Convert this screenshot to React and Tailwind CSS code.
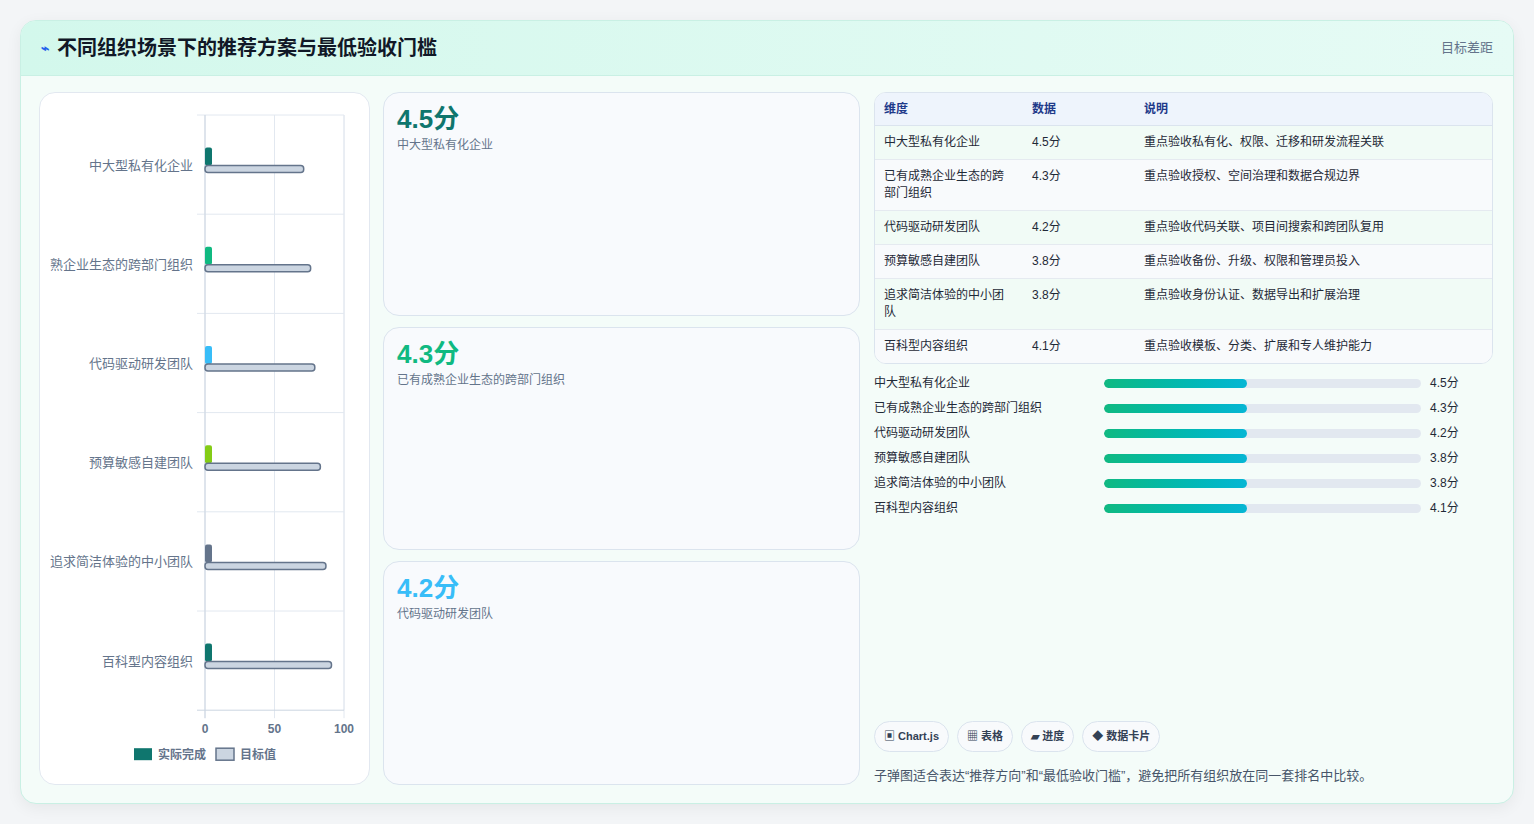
import React from "react";

const rows = [
  { name: "中大型私有化企业", v: "4.5分", t: 71, c: "#0f766e", d: "重点验收私有化、权限、迁移和研发流程关联" },
  { name: "已有成熟企业生态的跨部门组织", short: "熟企业生态的跨部门组织", v: "4.3分", t: 76, c: "#10b981", d: "重点验收授权、空间治理和数据合规边界" },
  { name: "代码驱动研发团队", v: "4.2分", t: 79, c: "#38bdf8", d: "重点验收代码关联、项目间搜索和跨团队复用" },
  { name: "预算敏感自建团队", v: "3.8分", t: 83, c: "#84cc16", d: "重点验收备份、升级、权限和管理员投入" },
  { name: "追求简洁体验的中小团队", v: "3.8分", t: 87, c: "#64748b", d: "重点验收身份认证、数据导出和扩展治理" },
  { name: "百科型内容组织", v: "4.1分", t: 91, c: "#0f766e", d: "重点验收模板、分类、扩展和专人维护能力" },
];

const font = { fontFamily: '"Liberation Sans","Noto Sans CJK SC",sans-serif' };

function Chart() {
  const x0 = 165, w = 139, top = 22, rh = 99.2;
  return (
    <svg width="330" height="690" className="block">
      {[0, 50, 100].map((t) => (
        <line key={t} x1={x0 + (w * t) / 100} x2={x0 + (w * t) / 100} y1={top} y2={top + rh * 6 + 8} stroke="#e2e8f0" />
      ))}
      <line x1={x0 + w} x2={x0 + w} y1={top} y2={top + rh * 6} stroke="#e2e8f0" />
      {rows.map((r, i) => (
        <line key={i} x1={x0 - 8} x2={x0 + w} y1={top + rh * i} y2={top + rh * i} stroke="#e2e8f0" />
      ))}
      <line x1={x0 - 8} x2={x0 + w} y1={top + rh * 6} y2={top + rh * 6} stroke="#cbd5e1" />
      <line x1={x0} x2={x0} y1={top} y2={top + rh * 6 + 8} stroke="#cbd5e1" />
      {rows.map((r, i) => {
        const cy = top + rh * i + rh / 2;
        return (
          <g key={i}>
            <text x={x0 - 12} y={cy + 5} textAnchor="end" fontSize="13" fill="#64748b">{r.short || r.name}</text>
            <rect x={x0} y={cy - 17} width="7" height="18" rx="2" fill={r.c} />
            <rect x={x0} y={cy + 1} width={(w * r.t) / 100} height="7" rx="3" fill="#cbd5e1" stroke="#64748b" strokeWidth="1.5" />
          </g>
        );
      })}
      {[0, 50, 100].map((t) => (
        <text key={t} x={x0 + (w * t) / 100} y={top + rh * 6 + 23} textAnchor="middle" fontSize="12" fontWeight="bold" fill="#64748b">{t}</text>
      ))}
      <rect x="94" y={top + rh * 6 + 38} width="18" height="12" fill="#0f766e" />
      <text x="118" y={top + rh * 6 + 49} fontSize="12" fontWeight="bold" fill="#64748b">实际完成</text>
      <rect x="176" y={top + rh * 6 + 38} width="18" height="12" fill="#cbd5e1" stroke="#64748b" strokeWidth="1.5" />
      <text x="200" y={top + rh * 6 + 49} fontSize="12" fontWeight="bold" fill="#64748b">目标值</text>
    </svg>
  );
}

const cards = [
  { v: "4.5分", n: "中大型私有化企业", c: "text-[#0f766e]" },
  { v: "4.3分", n: "已有成熟企业生态的跨部门组织", c: "text-[#10b981]" },
  { v: "4.2分", n: "代码驱动研发团队", c: "text-[#38bdf8]" },
];

export default function App() {
  return (
    <div style={font} className="w-[1534px] h-[824px] bg-[#f3f5f7] pt-5 pl-5">
      <div className="w-[1494px] h-[784px] rounded-2xl border border-[#c9f0e4] bg-[#f4fcf9] overflow-hidden shadow-[0_4px_16px_rgba(0,0,0,0.06)] flex flex-col">
        <div className="h-[55px] shrink-0 bg-gradient-to-r from-[#d3f8ec] to-[#e6fbf5] border-b border-[#c9f0e4] flex items-center justify-between px-5">
          <div className="flex items-center gap-2">
            <span className="text-[#2563eb] text-sm font-bold">⌁</span>
            <h1 className="text-xl font-bold text-[#111827]">不同组织场景下的推荐方案与最低验收门槛</h1>
          </div>
          <span className="text-[13px] text-[#64748b]">目标差距</span>
        </div>
        <div className="flex-1 flex gap-[13px] pl-[18px] pr-5 pt-[16px] pb-[18px]">
          <div className="w-[331px] rounded-2xl border border-[#e2e8f0] bg-white">
            <Chart />
          </div>
          <div className="w-[477px] flex flex-col gap-[11px]">
            {cards.map((c) => (
              <div key={c.v} className="flex-1 rounded-2xl border border-[#dbe4ee] bg-[#f8fafd] px-[13px] py-2">
                <div className={`text-[26px] font-bold leading-9 ${c.c}`}>{c.v}</div>
                <div className="text-xs text-[#64748b]">{c.n}</div>
              </div>
            ))}
          </div>
          <div className="flex-1 flex flex-col pl-[1px]">
            <div className="rounded-xl border border-[#dbe4ee] overflow-hidden bg-white text-xs text-[#1f2937]">
              <div className="flex bg-[#eef4fc] text-[#1e3a8a] font-bold border-b border-[#dbe4ee] h-[33px] items-center">
                <div className="w-[157px] pl-[9px]">维度</div>
                <div className="w-[112px]">数据</div>
                <div>说明</div>
              </div>
              {rows.map((r, i) => (
                <div key={i} className={`flex py-2 leading-[17px] border-b last:border-b-0 border-[#e5eaf0] ${i % 2 === 0 ? "bg-[#f1fbf6]" : "bg-[#f8fafc]"}`}>
                  <div className="w-[157px] pl-[9px] pr-6">{r.name}</div>
                  <div className="w-[112px]">{r.v}</div>
                  <div>{r.d}</div>
                </div>
              ))}
            </div>
            <div className="mt-[10px] flex flex-col gap-[7px] text-xs text-[#1f2937]">
              {rows.map((r, i) => (
                <div key={i} className="flex items-center h-[18px]">
                  <div className="w-[230px]">{r.name}</div>
                  <div className="w-[317px] h-[9px] rounded-full bg-[#e2e8f0] overflow-hidden">
                    <div className="h-full w-[45%] rounded-full bg-gradient-to-r from-[#10b981] to-[#06b6d4]" />
                  </div>
                  <div className="ml-[9px]">{r.v}</div>
                </div>
              ))}
            </div>
            <div className="mt-auto flex gap-2 text-[11px] text-[#334155] font-bold">
              {["▣ Chart.js", "▦ 表格", "▰ 进度", "◆ 数据卡片"].map((t) => (
                <span key={t} className="rounded-full border border-[#dbe4ee] bg-[#f8fafc] px-[9px] py-[6px]">{t}</span>
              ))}
            </div>
            <p className="mt-[14px] text-[13px] text-[#475569]">子弹图适合表达“推荐方向”和“最低验收门槛”，避免把所有组织放在同一套排名中比较。</p>
          </div>
        </div>
      </div>
    </div>
  );
}
